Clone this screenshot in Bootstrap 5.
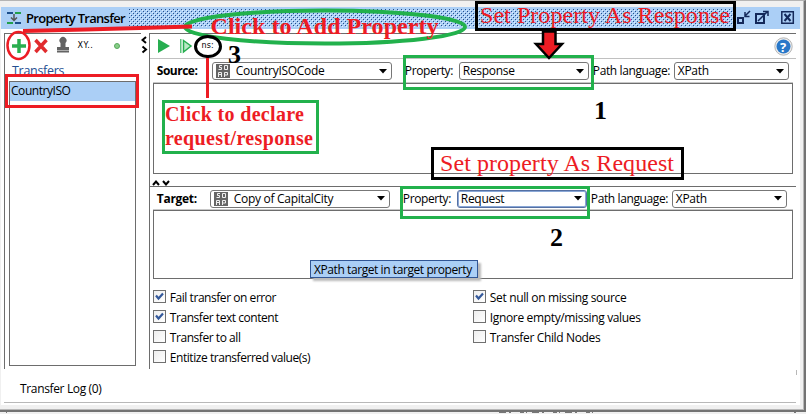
<!DOCTYPE html>
<html lang="en">
<head>
<meta charset="utf-8">
<title>Property Transfer</title>
<link href="https://cdn.jsdelivr.net/npm/bootstrap@5.3.0/dist/css/bootstrap.min.css" rel="stylesheet">
<style>
html,body{width:806px;height:414px;overflow:hidden}
body{background:#f0f0f0;font:12px/16px "Open Sans","Noto Sans",sans-serif;color:#000;letter-spacing:-.3px;white-space:nowrap}
svg{display:block;flex:none}
.win{width:806px;height:412px;border-top:1px solid #b4b4b4;border-right:2px solid #737373;border-bottom:2px solid #737373;padding:6px 4px 5px 1px;box-shadow:inset -1px -1px #b8b8b8}
.titlebar{height:22px;background:#abcff6;padding-left:6px;padding-right:5px}
.titlebar b{font-size:13px;font-weight:600;width:105px;letter-spacing:-.72px;margin-left:5px}
.dots{height:18px;width:606px}
.inner{height:376px;background:#fff;padding:4px 4px 3px 3px}
.panes{height:336px}
.left-pane{width:137px;border-left:1px solid #6d6d6d;border-top:1px solid #6d6d6d}
.tools{height:25px}
.legend-line{height:15px;margin-bottom:7px;overflow:hidden;color:#244e91;padding:4px 0 0 7px;font-size:12.5px;letter-spacing:-.3px}
.listing{width:127px;height:285px;border:1px solid #6d6d6d;margin-left:4px}
.picked{height:19px;background:#abcff6;padding:1px 1px;letter-spacing:-.45px}
.split-v{width:8px;padding-top:3px}
.right-pane{width:648px;border-left:1px solid #6d6d6d;border-top:1px solid #6d6d6d}
.right-pane .tools{border-bottom:1px solid #c0c0c0;padding:0 3px 0 8px}
.fields{height:24px;padding-left:7px}
.fields.second{border-top:1px solid #6d6d6d}
.fields strong{font-weight:700;width:55px;letter-spacing:-.5px}
.fields strong.tgt{width:53px;letter-spacing:-.3px}
.fields .lbl{width:67px;padding-left:13px;letter-spacing:-.4px}
.fields .lbl2{width:85px;padding-left:4px;letter-spacing:-.38px}
.combo{height:18px;border:1px solid #777;border-radius:3px;background:#fff;padding:0 4px 0 3px}
.combo svg.so{margin-right:6px}
.combo.wide{width:180px}
.combo.mid{width:130px}
.combo.slim{width:115px}
.combo.hot{border-color:#5570a3;box-shadow:inset 0 0 0 1px #89a7d6}
.area{width:640px;border:1px solid #6d6d6d;box-shadow:0 -1px #c8c8c8;margin-left:3px}
.area.src{height:91px}
.area.dst{height:69px}
.split-h{height:12px;padding:5px 0 0 2px}
.opts{margin:11px 0 0 3px;letter-spacing:-.45px}
.opts .first{width:320px}
.opt{height:20px;gap:4px}
.opt i{width:13px;height:13px;border:1px solid #707070;background:linear-gradient(135deg,#eee,#fff);flex:none}
.opts .loose{letter-spacing:-.35px}
.log{height:34px;padding:12px 0 0 16px;border-bottom:1px solid #b8b8b8;letter-spacing:-.35px}
.tip{left:310px;top:260px;width:168px;height:18px;border:1px solid #315695;background:#abcff6;padding-left:3px;line-height:17px;letter-spacing:-.42px;box-shadow:3px 3px 2px #bbb}
.notes{left:0;top:0}
.notes text{font-family:"Liberation Serif",serif;letter-spacing:0}
</style>
<script src="https://cdn.jsdelivr.net/npm/bootstrap@5.3.0/dist/js/bootstrap.bundle.min.js"></script>
</head>
<body class="position-relative">
<svg width="0" height="0" class="position-absolute">
 <symbol id="soap" viewBox="0 0 14 14"><path fill="#656565" d="M0 0h14v14H0z"/><path fill="none" stroke="#eee" d="M6 1.500H3.500v2h2v2H2.500M8.500 1.500h3v4h-3zM2.500 13V8.500h3V13M2.500 10.500h3M8.500 13V8.500h3v2.500h-3"/></symbol>
 <symbol id="arr" viewBox="0 0 8 5"><path d="M0 0h8L4 4.500z"/></symbol>
 <symbol id="chk" viewBox="0 0 11 11"><path fill="none" stroke="#34599b" stroke-width="2.200" d="M2 4.500l2.500 3L9 2.500"/></symbol>
</svg>
<main class="win">
 <header class="titlebar d-flex align-items-center">
  <svg width="14" height="14"><path stroke="#1c4e8c" stroke-width="2" d="M0 2h6M8 12h6"/><path stroke="#22a04c" stroke-width="2" d="M8 2h6M0 12h6"/><path fill="none" stroke="#555" stroke-width="1.500" d="M7 3v6M4 6.500l3 3 3-3"/></svg>
  <b>Property Transfer</b>
  <svg class="dots"><defs><pattern id="dt" width="4" height="4" patternUnits="userSpaceOnUse"><path fill="#27508c" d="M0 0h1v1H0zM2 2h1v1H2z"/><path fill="#e0f0ff" d="M1 1h1v1H1zM3 3h1v1H3z"/></pattern></defs><rect width="606" height="18" fill="url(#dt)"/></svg>
  <svg width="60" height="16" class="ms-auto" fill="none" stroke="#14295a"><path stroke-width="2" d="M3 8h5v5H3z"/><path stroke-width="1.500" d="M15 1L10 6M10 2v4.500h4.500"/><path stroke-width="2" d="M21 4h8v9h-8z"/><path stroke-width="1.500" d="M23 11L32 2M28 1.500h5V6"/><path stroke-width="1.500" d="M46.800 1.800h11.500v11.500H46.800z"/><path stroke-width="2" d="M49.500 4l6 7M55.500 4l-6 7"/></svg>
 </header>
 <section class="inner">
  <div class="panes d-flex">
   <aside class="left-pane">
    <div class="tools">
     <svg width="130" height="24"><path stroke="#2aae4f" stroke-width="3.500" d="M7 12h14M14 5v14"/><path stroke="#e12b2e" stroke-width="3.500" d="M30.500 6l11 12M41.500 6l-11 12"/><path fill="#636363" d="M55.500 9a3.500 3.500 0 1 1 5 0v4H64v3.500H52V13h3.500zM52 17h12v1.500H52z"/><circle cx="112" cy="12" r="2.500" fill="#88ce88" stroke="#58a85d"/><text x="72.500" y="14" font-family="DejaVu Sans" font-size="8" textLength="15" fill="#000">XY..</text></svg>
    </div>
    <div class="legend-line">Transfers</div>
    <div class="listing" role="listbox"><div class="picked">CountryISO</div></div>
   </aside>
   <div class="split-v"><svg width="7" height="18" fill="none" stroke="#000" stroke-width="2"><path d="M5 1L1.500 4 5 7M1.500 10.500L5 13.500l-3.500 3"/></svg></div>
   <section class="right-pane">
    <div class="tools d-flex align-items-center">
     <svg width="60" height="24"><path fill="#27ae50" d="M0 5l12 7-12 7z"/><path fill="#5cc37c" d="M22 5h1.500v14H22z"/><path fill="#b9e9c5" stroke="#27ae50" stroke-width="1.500" d="M25.500 6.500L33 12l-7.500 6z"/><text x="43.500" y="14" font-family="DejaVu Sans" font-size="8" textLength="12">ns:</text></svg>
     <svg class="ms-auto" width="19" height="19"><circle cx="9.500" cy="9.500" r="8.700" fill="#eee" stroke="#b5b5b5"/><circle cx="9.500" cy="9.500" r="7" fill="#2877c8"/><text x="6" y="14.500" font-size="13" font-weight="700" fill="#fff">?</text></svg>
    </div>
    <div class="fields d-flex align-items-center">
     <strong>Source:</strong>
     <div class="combo wide d-flex align-items-center"><svg class="so" width="14" height="14"><use href="#soap"/></svg><span>CountryISOCode</span><svg class="ms-auto" width="8" height="5"><use href="#arr"/></svg></div>
     <span class="lbl">Property:</span>
     <div class="combo mid d-flex align-items-center"><span>Response</span><svg class="ms-auto" width="8" height="5"><use href="#arr"/></svg></div>
     <span class="lbl2">Path language:</span>
     <div class="combo slim d-flex align-items-center"><span>XPath</span><svg class="ms-auto" width="8" height="5"><use href="#arr"/></svg></div>
    </div>
    <div class="area src"></div>
    <div class="split-h"><svg width="20" height="7" fill="none" stroke="#000" stroke-width="2"><path d="M1 6l3-3.500L7 6M11 2l3 3.500L17 2"/></svg></div>
    <div class="fields second d-flex align-items-center">
     <strong class="tgt">Target:</strong>
     <div class="combo wide d-flex align-items-center"><svg class="so" width="14" height="14"><use href="#soap"/></svg><span>Copy of CapitalCity</span><svg class="ms-auto" width="8" height="5"><use href="#arr"/></svg></div>
     <span class="lbl">Property:</span>
     <div class="combo mid hot d-flex align-items-center"><span>Request</span><svg class="ms-auto" width="8" height="5"><use href="#arr"/></svg></div>
     <span class="lbl2">Path language:</span>
     <div class="combo slim d-flex align-items-center"><span>XPath</span><svg class="ms-auto" width="8" height="5"><use href="#arr"/></svg></div>
    </div>
    <div class="area dst"></div>
    <div class="opts d-flex">
     <div class="first">
      <div class="opt d-flex"><i><svg width="11" height="11"><use href="#chk"/></svg></i><span>Fail transfer on error</span></div>
      <div class="opt d-flex"><i><svg width="11" height="11"><use href="#chk"/></svg></i><span>Transfer text content</span></div>
      <div class="opt d-flex"><i></i><span>Transfer to all</span></div>
      <div class="opt d-flex"><i></i><span>Entitize transferred value(s)</span></div>
     </div>
     <div class="loose">
      <div class="opt d-flex"><i><svg width="11" height="11"><use href="#chk"/></svg></i><span>Set null on missing source</span></div>
      <div class="opt d-flex"><i></i><span>Ignore empty/missing values</span></div>
      <div class="opt d-flex"><i></i><span>Transfer Child Nodes</span></div>
     </div>
    </div>
   </section>
  </div>
  <footer class="log">Transfer Log (0)</footer>
 </section>
</main>
<div class="tip position-absolute">XPath target in target property</div>
<svg class="notes position-absolute" width="806" height="414" fill="none">
 <g stroke="#22b14c">
  <ellipse cx="325" cy="27" rx="140" ry="16.500" stroke-width="4"/>
  <path stroke-width="3" d="M404.500 56.500h188v32h-188zM401.500 187.500h187v30h-187zM163.500 101.500h154v51h-154z"/>
 </g>
 <g stroke="#ed1c24">
  <path stroke-width="4" d="M23 31L85 29.500 140 28 192 26.500"/>
  <ellipse cx="18.500" cy="45.500" rx="11" ry="13.500" stroke-width="2.500"/>
  <path stroke-width="3" d="M6.500 75.500h131v31H6.500zM207.500 55v43"/>
 </g>
 <ellipse cx="208" cy="46.500" rx="12.500" ry="10" stroke="#000" stroke-width="3"/>
 <path stroke="#000" stroke-width="3" d="M476.500 2.500h258v27h-258zM432.500 148.500h250v30h-250z"/>
 <path fill="#ed1c24" stroke="#000" stroke-width="2.500" d="M543 31.500h12.500V44h6.500L549 58 536 44h7z"/>
 <g fill="#ed1c24">
  <text x="210.500" y="33.500" font-size="24" font-weight="700" textLength="228">Click to Add Property</text>
  <text x="480" y="23" font-size="24" textLength="250">Set Property As Response</text>
  <text x="440" y="171" font-size="24" textLength="234">Set property As Request</text>
  <text x="165" y="121" font-size="20" font-weight="700" textLength="139">Click to declare</text>
  <text x="165" y="145" font-size="20" font-weight="700" textLength="148">request/response</text>
 </g>
 <g fill="#000" font-weight="700" font-size="26">
  <text x="594" y="119">1</text><text x="550" y="246">2</text><text x="228" y="63">3</text>
 </g>
 <path stroke="#b8b8b8" d="M796.500 370v5"/>
 <path stroke="#777" stroke-dasharray="7 3 2 9 4 2 1 5" d="M499 412.500h94M794 412.500h2M6 412.500h1"/>
</svg>
</body>
</html>
